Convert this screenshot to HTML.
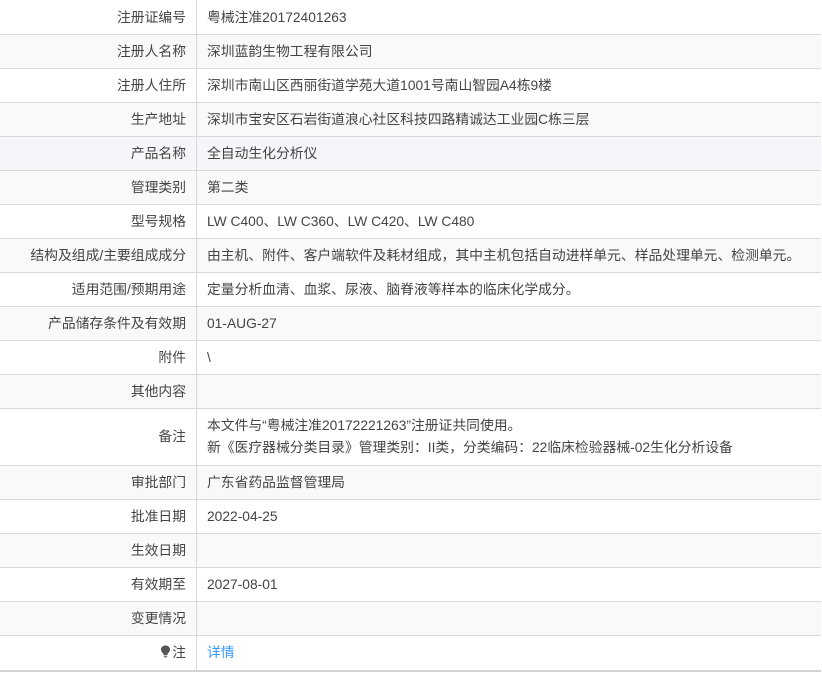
<!DOCTYPE html>
<html><head><meta charset="utf-8"><style>
*{margin:0;padding:0;box-sizing:border-box}
body{width:822px;height:678px;background:#fff;font-family:"Liberation Sans","Noto Sans CJK SC",sans-serif;font-size:13.8px;color:#444;position:relative;overflow:hidden}
.r{position:absolute;left:0;width:821px;border-bottom:1px solid #d9d9d9}
.l{position:absolute;left:0;top:0;bottom:0;width:197px;border-right:1px solid #d9d9d9;text-align:right;padding-right:10px;line-height:33px;white-space:nowrap}
.v{position:absolute;left:197px;top:0;padding-left:10px;line-height:33px;white-space:nowrap}
.g{background:#f9f9f9}
.b{background:#f5f6fa}
a{color:#3399ff;text-decoration:none}
</style></head><body>
<div class="r" style="top:0;height:35px"><div class="l" style="line-height:35px">注册证编号</div><div class="v" style="line-height:35px">粤械注准20172401263</div></div>
<div class="r g" style="top:35px;height:34px"><div class="l">注册人名称</div><div class="v">深圳蓝韵生物工程有限公司</div></div>
<div class="r" style="top:69px;height:34px"><div class="l">注册人住所</div><div class="v">深圳市南山区西丽街道学苑大道1001号南山智园A4栋9楼</div></div>
<div class="r g" style="top:103px;height:34px"><div class="l">生产地址</div><div class="v">深圳市宝安区石岩街道浪心社区科技四路精诚达工业园C栋三层</div></div>
<div class="r b" style="top:137px;height:34px"><div class="l">产品名称</div><div class="v">全自动生化分析仪</div></div>
<div class="r g" style="top:171px;height:34px"><div class="l">管理类别</div><div class="v">第二类</div></div>
<div class="r" style="top:205px;height:34px"><div class="l">型号规格</div><div class="v">LW C400、LW C360、LW C420、LW C480</div></div>
<div class="r g" style="top:239px;height:34px"><div class="l">结构及组成/主要组成成分</div><div class="v">由主机、附件、客户端软件及耗材组成，其中主机包括自动进样单元、样品处理单元、检测单元。</div></div>
<div class="r" style="top:273px;height:34px"><div class="l">适用范围/预期用途</div><div class="v">定量分析血清、血浆、尿液、脑脊液等样本的临床化学成分。</div></div>
<div class="r g" style="top:307px;height:34px"><div class="l">产品储存条件及有效期</div><div class="v">01-AUG-27</div></div>
<div class="r" style="top:341px;height:34px"><div class="l">附件</div><div class="v">\</div></div>
<div class="r g" style="top:375px;height:34px"><div class="l">其他内容</div><div class="v"></div></div>
<div class="r" style="top:409px;height:57px"><div class="l" style="line-height:56px">备注</div><div class="v" style="line-height:22px;top:6px"><div>本文件与“粤械注准20172221263”注册证共同使用。</div><div>新《医疗器械分类目录》管理类别：II类，分类编码：22临床检验器械-02生化分析设备</div></div></div>
<div class="r g" style="top:466px;height:34px"><div class="l">审批部门</div><div class="v">广东省药品监督管理局</div></div>
<div class="r" style="top:500px;height:34px"><div class="l">批准日期</div><div class="v">2022-04-25</div></div>
<div class="r g" style="top:534px;height:34px"><div class="l">生效日期</div><div class="v"></div></div>
<div class="r" style="top:568px;height:34px"><div class="l">有效期至</div><div class="v">2027-08-01</div></div>
<div class="r g" style="top:602px;height:34px"><div class="l">变更情况</div><div class="v"></div></div>
<div class="r" style="top:636px;height:36px;border-bottom:2px solid #d4d4d4"><div class="l" style="line-height:34px"><svg width="11" height="13" viewBox="0 0 11 13" style="margin-right:1px;vertical-align:-1px"><path d="M5.5 0.5C2.7 0.5 1 2.4 1 4.6c0 1.8 1.2 2.8 2 3.7.5.6.6 1.2.6 1.7h3.8c0-.5.1-1.1.6-1.7.8-.9 2-1.9 2-3.7C10 2.4 8.3.5 5.5.5z" fill="#555"/><rect x="3.8" y="10.6" width="3.4" height="1.8" rx=".6" fill="#777"/></svg>注</div><div class="v" style="line-height:34px"><a>详情</a></div></div>
</body></html>
